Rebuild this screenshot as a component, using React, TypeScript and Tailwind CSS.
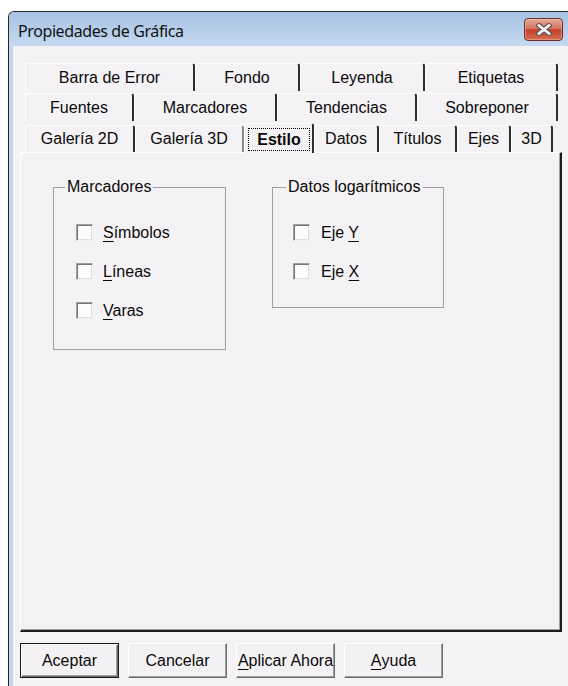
import React from "react";

type TabDef = { label: string; cls: string };

const row1: TabDef[] = [
  { label: "Barra de Error", cls: "w-[170px] border-r-[#2e2e2e]" },
  { label: "Fondo", cls: "w-[105px] border-r-[#2e2e2e]" },
  { label: "Leyenda", cls: "w-[125px] border-r-[#2e2e2e]" },
  { label: "Etiquetas", cls: "w-[133px] border-r-[#2e2e2e]" },
];

const row2: TabDef[] = [
  { label: "Fuentes", cls: "w-[109px] border-r-[#2e2e2e]" },
  { label: "Marcadores", cls: "w-[143px] border-r-[#2e2e2e]" },
  { label: "Tendencias", cls: "w-[140px] border-r-[#2e2e2e]" },
  { label: "Sobreponer", cls: "w-[141px] border-r-[#2e2e2e]" },
];

const row3a: TabDef[] = [
  { label: "Galería 2D", cls: "w-[110px] border-r-[#2e2e2e]" },
  { label: "Galería 3D", cls: "w-[109px] border-r-[#8c8c8c]" },
];

const row3b: TabDef[] = [
  { label: "Datos", cls: "w-[65px] border-r-[#2e2e2e]" },
  { label: "Títulos", cls: "w-[78px] border-r-[#2e2e2e]" },
  { label: "Ejes", cls: "w-[54px] border-r-[#2e2e2e]" },
  { label: "3D", cls: "w-[42px] border-r-[#2e2e2e]" },
];

function Tab({ label, cls, h }: { label: string; cls: string; h: string }) {
  return (
    <div
      className={`${cls} ${h} shrink-0 flex items-center justify-center border-t border-l border-t-white border-l-white border-r-2 rounded-t-[3px] text-[16px] leading-none text-[#0a0a0a]`}
    >
      {label}
    </div>
  );
}

function Check() {
  return (
    <div className="w-[17px] h-[17px] shrink-0 bg-[#fcfcfc] border border-t-[#a0a0a0] border-l-[#a0a0a0] border-r-[#f2f2f2] border-b-[#f2f2f2] shadow-[inset_1px_1px_0_#767676,inset_-1px_-1px_0_#dedede]" />
  );
}

function CheckRow({ children, gap }: { children: React.ReactNode; gap: string }) {
  return (
    <div className="flex items-center h-[17px]">
      <Check />
      <span className={`${gap} text-[16px] leading-none`}>{children}</span>
    </div>
  );
}

function U({ children }: { children: React.ReactNode }) {
  return <span className="underline decoration-1 underline-offset-[3px]">{children}</span>;
}

function Btn({ children, def }: { children: React.ReactNode; def?: boolean }) {
  return (
    <div
      className={`w-[99px] h-[35px] shrink-0 flex items-center justify-center text-[16px] leading-none bg-[#f4f1f4] ${
        def
          ? "border border-[#1a1a1a] shadow-[inset_1px_1px_0_#ffffff,inset_-1px_-1px_0_#6a6a6a,inset_-2px_-2px_0_#a0a0a0]"
          : "border border-t-white border-l-white border-r-[#6a6a6a] border-b-[#6a6a6a] shadow-[inset_-1px_-1px_0_#a0a0a0]"
      }`}
    >
      {children}
    </div>
  );
}

export default function App() {
  return (
    <div className="w-[568px] h-[686px] overflow-hidden bg-white font-['Liberation_Sans',Arial,sans-serif] text-[#0a0a0a]">
      <div className="ml-[8px] mt-[11px] w-[560px] h-[675px] border-t border-l border-[#262626] rounded-tl-[6px] bg-[#c3d6ee] flex flex-col overflow-hidden">
        {/* Title bar */}
        <div className="h-[34px] shrink-0 flex items-start bg-[linear-gradient(to_bottom,#a7c2e2,#c5d9f0)]">
          <span className="ml-[9px] mt-[9px] text-[16px] tracking-[-0.4px] leading-[20px] text-[#111] font-['Noto_Sans',sans-serif]">
            Propiedades de Gráfica
          </span>
          <div className="ml-auto mr-[5px] mt-[6px] w-[39px] h-[23px] rounded-[4px] border border-[#6d2c25] bg-[linear-gradient(to_bottom,#e8a899_0%,#d4735f_45%,#c0402c_52%,#da6a50_100%)] shadow-[inset_0_0_0_1px_rgba(255,255,255,0.3)] flex items-center justify-center">
            <svg width="18" height="13" viewBox="0 0 18 13">
              <path d="M4 2.5 L14 10.5 M14 2.5 L4 10.5" stroke="#545454" strokeWidth="5" strokeLinecap="square" />
              <path d="M4 2.5 L14 10.5 M14 2.5 L4 10.5" stroke="#f4f4f4" strokeWidth="2.8" strokeLinecap="square" />
            </svg>
          </div>
        </div>

        {/* Frame + body */}
        <div className="flex-1 flex">
          <div className="w-[4px] shrink-0 bg-[#c3d6ee]" />
          <div className="flex-1 bg-[#f5f2f5] pl-[7px] pt-[17px]">
            {/* Tabs */}
            <div className="ml-[5px] flex flex-col gap-[2px]">
              <div className="flex">
                {row1.map((t) => (
                  <Tab key={t.label} label={t.label} cls={t.cls} h="h-[28px]" />
                ))}
              </div>
              <div className="flex">
                {row2.map((t) => (
                  <Tab key={t.label} label={t.label} cls={t.cls} h="h-[28px]" />
                ))}
              </div>
              <div className="flex items-end">
                {row3a.map((t) => (
                  <Tab key={t.label} label={t.label} cls={t.cls} h="h-[27px]" />
                ))}
                <div className="w-[70px] h-[30px] -mb-px relative z-10 shrink-0 bg-[#f5f2f5] border-t border-l border-t-white border-l-white border-r-2 border-r-[#2e2e2e] rounded-t-[3px] flex pl-[3px] pr-[2px] pt-[4px] pb-[2px]">
                  <div className="flex-1 border border-dotted border-black flex items-center justify-center font-bold text-[16px] leading-none">
                    Estilo
                  </div>
                </div>
                {row3b.map((t) => (
                  <Tab key={t.label} label={t.label} cls={t.cls} h="h-[27px]" />
                ))}
              </div>
            </div>

            {/* Panel */}
            <div className="w-[542px] h-[480px] bg-[#f5f2f5] border-t border-l border-t-white border-l-white border-r-2 border-b-2 border-r-[#1c1c1c] border-b-[#1c1c1c] shadow-[inset_-1px_-1px_0_#a0a0a0] flex items-start pl-[32px] pt-[25px]">
              <fieldset className="w-[173px] border border-[#a0a0a0]">
                <legend className="ml-[11px] px-[2px] text-[16px] leading-[18px]">Marcadores</legend>
                <div className="pl-[22px] pt-[28px] pb-[30px] flex flex-col gap-[22px]">
                  <CheckRow gap="ml-[10px]">
                    <U>S</U>ímbolos
                  </CheckRow>
                  <CheckRow gap="ml-[10px]">
                    <U>L</U>íneas
                  </CheckRow>
                  <CheckRow gap="ml-[10px]">
                    <U>V</U>aras
                  </CheckRow>
                </div>
              </fieldset>
              <fieldset className="ml-[46px] w-[172px] border border-[#a0a0a0]">
                <legend className="ml-[13px] px-[2px] text-[16px] leading-[18px]">Datos logarítmicos</legend>
                <div className="pl-[20px] pt-[28px] pb-[27px] flex flex-col gap-[22px]">
                  <CheckRow gap="ml-[11px]">
                    Eje <U>Y</U>
                  </CheckRow>
                  <CheckRow gap="ml-[11px]">
                    Eje <U>X</U>
                  </CheckRow>
                </div>
              </fieldset>
            </div>

            {/* Buttons */}
            <div className="mt-[11px] flex gap-[9px]">
              <Btn def>Aceptar</Btn>
              <Btn>Cancelar</Btn>
              <Btn>
                <U>A</U>plicar Ahora
              </Btn>
              <Btn>
                <U>A</U>yuda
              </Btn>
            </div>
          </div>
        </div>
      </div>
    </div>
  );
}
